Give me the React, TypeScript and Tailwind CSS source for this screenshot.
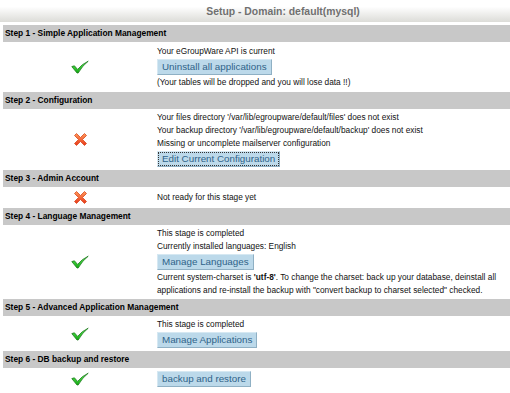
import type { ReactNode } from 'react'

function Check() {
  return (
    <svg width="18" height="14" viewBox="0 0 18 14">
      <defs>
        <linearGradient id="chk" x1="0" y1="0" x2="0" y2="1">
          <stop offset="0" stopColor="#5ff05a" />
          <stop offset="1" stopColor="#12a812" />
        </linearGradient>
      </defs>
      <path
        d="M0.8 6.6 L3.4 5.8 L6.6 9.4 Q11 4 17.2 1.2 Q11.4 5.6 7.2 13 L6 13 Z"
        fill="url(#chk)"
        stroke="#1c7a1c"
        strokeWidth="0.8"
        strokeLinejoin="round"
      />
    </svg>
  )
}

function Cross() {
  return (
    <svg width="15" height="15" viewBox="0 0 15 15">
      <defs>
        <linearGradient id="crs" x1="0" y1="0" x2="0" y2="1">
          <stop offset="0" stopColor="#ff9a5a" />
          <stop offset="1" stopColor="#e8381a" />
        </linearGradient>
      </defs>
      <path
        d="M1.5 3.5 L3.5 1.5 L7.5 5.5 L11.5 1.5 L13.5 3.5 L9.5 7.5 L13.5 11.5 L11.5 13.5 L7.5 9.5 L3.5 13.5 L1.5 11.5 L5.5 7.5 Z"
        fill="url(#crs)"
        stroke="#d8481e"
        strokeWidth="0.8"
        strokeLinejoin="round"
      />
    </svg>
  )
}

function Btn({ children, focus }: { children: ReactNode; focus?: boolean }) {
  return (
    <div className="my-[1px] flex h-[16px]">
      <button
        className={`h-[16px] bg-[#bcd9ea] px-[4px] text-[9.8px] leading-[14px] text-[#2f6389] border border-t-[#d6e8f2] border-l-[#d6e8f2] border-r-[#8fb0c4] border-b-[#8fb0c4] ${
          focus ? 'outline outline-1 outline-dotted outline-[#333] -outline-offset-2' : ''
        }`}
      >
        {children}
      </button>
    </div>
  )
}

function Line({ children }: { children: ReactNode }) {
  return <div className="h-[13px] leading-[13px] whitespace-nowrap">{children}</div>
}

function Step({
  title,
  ok,
  children,
  py = 'py-[3px]',
}: {
  title: string
  ok: boolean
  children: ReactNode
  py?: string
}) {
  return (
    <div>
      <div className="h-[17px] bg-[#c8c8c8] pl-[2px] text-[8.4px] font-bold leading-[17px] text-black">
        {title}
      </div>
      <div className={`grid grid-cols-[154px_1fr] ${py}`}>
        <div className="flex items-center justify-center">{ok ? <Check /> : <Cross />}</div>
        <div className="text-[8.3px] text-[#111]">{children}</div>
      </div>
    </div>
  )
}

export default function App() {
  return (
    <div className="h-[393px] w-[510px] overflow-hidden bg-white font-['Liberation_Sans',Arial,sans-serif]">
      <div className="h-[22px] bg-gradient-to-b from-white from-30% to-[#dcdcd8] text-center text-[10.4px] font-bold leading-[24px] text-[#707070]">
        <span className="pl-[56px]">Setup - Domain: default(mysql)</span>
      </div>
      <div className="ml-[3px] mt-[3px]">
        <Step title="Step 1 - Simple Application Management" ok>
          <Line>Your eGroupWare API is current</Line>
          <Btn>Uninstall all applications</Btn>
          <Line>(Your tables will be dropped and you will lose data !!)</Line>
        </Step>
        <Step title="Step 2 - Configuration" ok={false} py="py-[2px]">
          <Line>Your files directory '/var/lib/egroupware/default/files' does not exist</Line>
          <Line>Your backup directory '/var/lib/egroupware/default/backup' does not exist</Line>
          <Line>Missing or uncomplete mailserver configuration</Line>
          <Btn focus>Edit Current Configuration</Btn>
        </Step>
        <Step title="Step 3 - Admin Account" ok={false}>
          <div className="flex h-[15px] items-center">Not ready for this stage yet</div>
        </Step>
        <Step title="Step 4 - Language Management" ok py="py-[2px]">
          <Line>This stage is completed</Line>
          <Line>Currently installed languages: English</Line>
          <Btn>Manage Languages</Btn>
          <Line>
            Current system-charset is <b>'utf-8'</b>. To change the charset: back up your database, deinstall all
          </Line>
          <Line>applications and re-install the backup with "convert backup to charset selected" checked.</Line>
        </Step>
        <Step title="Step 5 - Advanced Application Management" ok py="py-[2px]">
          <Line>This stage is completed</Line>
          <Btn>Manage Applications</Btn>
        </Step>
        <Step title="Step 6 - DB backup and restore" ok py="py-[2px]">
          <Btn>backup and restore</Btn>
        </Step>
      </div>
    </div>
  )
}
